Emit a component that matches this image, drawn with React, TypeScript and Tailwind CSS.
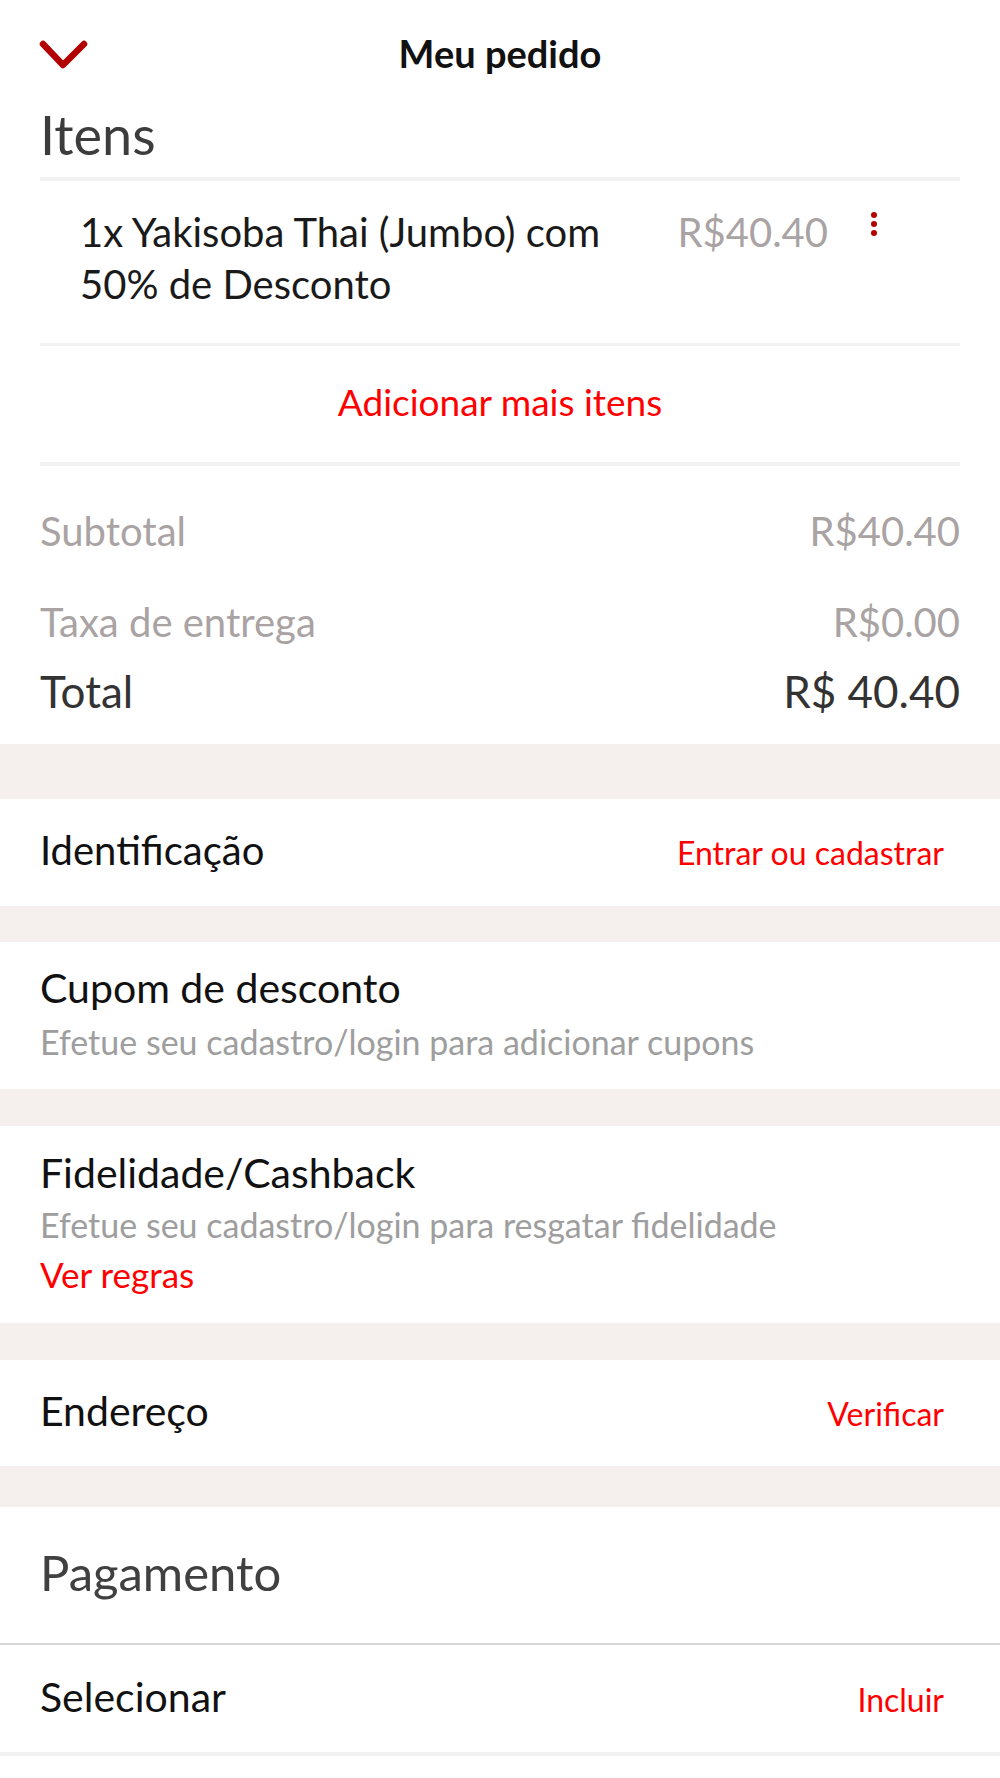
import React from "react";

function Chevron() {
  return (
    <svg width="52" height="34" viewBox="0 0 52 34" className="absolute left-[38px] top-[38px]">
      <path d="M5 6 L25 27 L46 6" fill="none" stroke="#b30000" strokeWidth="6.5" strokeLinecap="round" strokeLinejoin="round" />
    </svg>
  );
}

function Kebab() {
  return (
    <div className="ml-[42px] mt-[6px] flex w-[7px] flex-col items-center gap-[3px]">
      <span className="block h-[6px] w-[6px] rounded-full bg-[#b30000]" />
      <span className="block h-[6px] w-[6px] rounded-full bg-[#b30000]" />
      <span className="block h-[6px] w-[6px] rounded-full bg-[#b30000]" />
    </div>
  );
}

function Band({ h }: { h: string }) {
  return <div className={`${h} bg-[#f5f0ed]`} />;
}

export default function App() {
  return (
    <div className="w-[1000px] min-h-[1778px] bg-white font-['Lato','Noto_Sans',sans-serif] antialiased">
      {/* Header */}
      <div className="relative h-[108px] pt-[34px] flex justify-center">
        <Chevron />
        <h1 className="text-[38px] leading-none font-bold text-[#111]">Meu pedido</h1>
      </div>

      {/* Itens */}
      <div className="px-[40px]">
        <h2 className="text-[54px] leading-none font-normal text-[#3c3c3c]">Itens</h2>
        <div className="mt-[15px] h-[4px] bg-[#f2f2f2]" />
        <div className="flex pl-[40px] pr-[83px] pt-[25px] h-[162px]">
          <div className="w-[560px] text-[40px] leading-[52px] text-[#1a1a1a]">
            1x Yakisoba Thai (Jumbo) com 50% de Desconto
          </div>
          <div className="ml-auto text-[40px] leading-[52px] text-[#a9a3a4]">R$40.40</div>
          <Kebab />
        </div>
        <div className="h-[3px] bg-[#f3f3f3]" />
        <div className="h-[116px] pt-[37px] text-center">
          <span className="text-[37px] leading-none text-[#ff0000]">Adicionar mais itens</span>
        </div>
        <div className="h-[4px] bg-[#f2f2f2]" />

        <div className="mt-[45px] flex justify-between text-[40px] leading-none text-[#a9a3a4]">
          <span>Subtotal</span>
          <span>R$40.40</span>
        </div>
        <div className="mt-[51px] flex justify-between text-[40px] leading-none text-[#a9a3a4]">
          <span>Taxa de entrega</span>
          <span>R$0.00</span>
        </div>
        <div className="mt-[27px] pb-[31px] flex justify-between text-[44px] leading-none text-[#333]">
          <span>Total</span>
          <span>R$ 40.40</span>
        </div>
      </div>

      <Band h="h-[55px]" />

      {/* Identificação */}
      <div className="h-[107px] pt-[31px] pl-[40px] pr-[56px] flex items-baseline justify-between">
        <span className="text-[40px] leading-none text-[#111]">Identificação</span>
        <span className="text-[32px] leading-none text-[#ff0000]">Entrar ou cadastrar</span>
      </div>

      <Band h="h-[36px]" />

      {/* Cupom */}
      <div className="h-[147px] pt-[25px] px-[40px] flex flex-col">
        <span className="text-[41px] leading-none text-[#111]">Cupom de desconto</span>
        <span className="mt-[17px] text-[34px] leading-none text-[#9e9e9e]">
          Efetue seu cadastro/login para adicionar cupons
        </span>
      </div>

      <Band h="h-[37px]" />

      {/* Fidelidade */}
      <div className="h-[197px] pt-[26px] px-[40px] flex flex-col">
        <span className="text-[41px] leading-none text-[#111]">Fidelidade/Cashback</span>
        <span className="mt-[15px] text-[34px] leading-none text-[#9e9e9e]">
          Efetue seu cadastro/login para resgatar fidelidade
        </span>
        <span className="mt-[15px] text-[35px] leading-none text-[#ff0000]">Ver regras</span>
      </div>

      <Band h="h-[37px]" />

      {/* Endereço */}
      <div className="h-[106px] pt-[30px] pl-[40px] pr-[56px] flex items-baseline justify-between">
        <span className="text-[41px] leading-none text-[#111]">Endereço</span>
        <span className="text-[32px] leading-none text-[#ff0000]">Verificar</span>
      </div>

      <Band h="h-[41px]" />

      {/* Pagamento */}
      <div className="h-[136px] pt-[41px] px-[40px]">
        <h2 className="text-[49px] leading-none text-[#404040]">Pagamento</h2>
      </div>
      <div className="h-[2px] bg-[#d6d6d6]" />
      <div className="h-[107px] pt-[31px] pl-[40px] pr-[56px] flex items-baseline justify-between">
        <span className="text-[41px] leading-none text-[#111]">Selecionar</span>
        <span className="text-[32px] leading-none text-[#ff0000]">Incluir</span>
      </div>
      <div className="h-[4px] bg-[#f2f2f2]" />
      <div className="h-[22px]" />
    </div>
  );
}
